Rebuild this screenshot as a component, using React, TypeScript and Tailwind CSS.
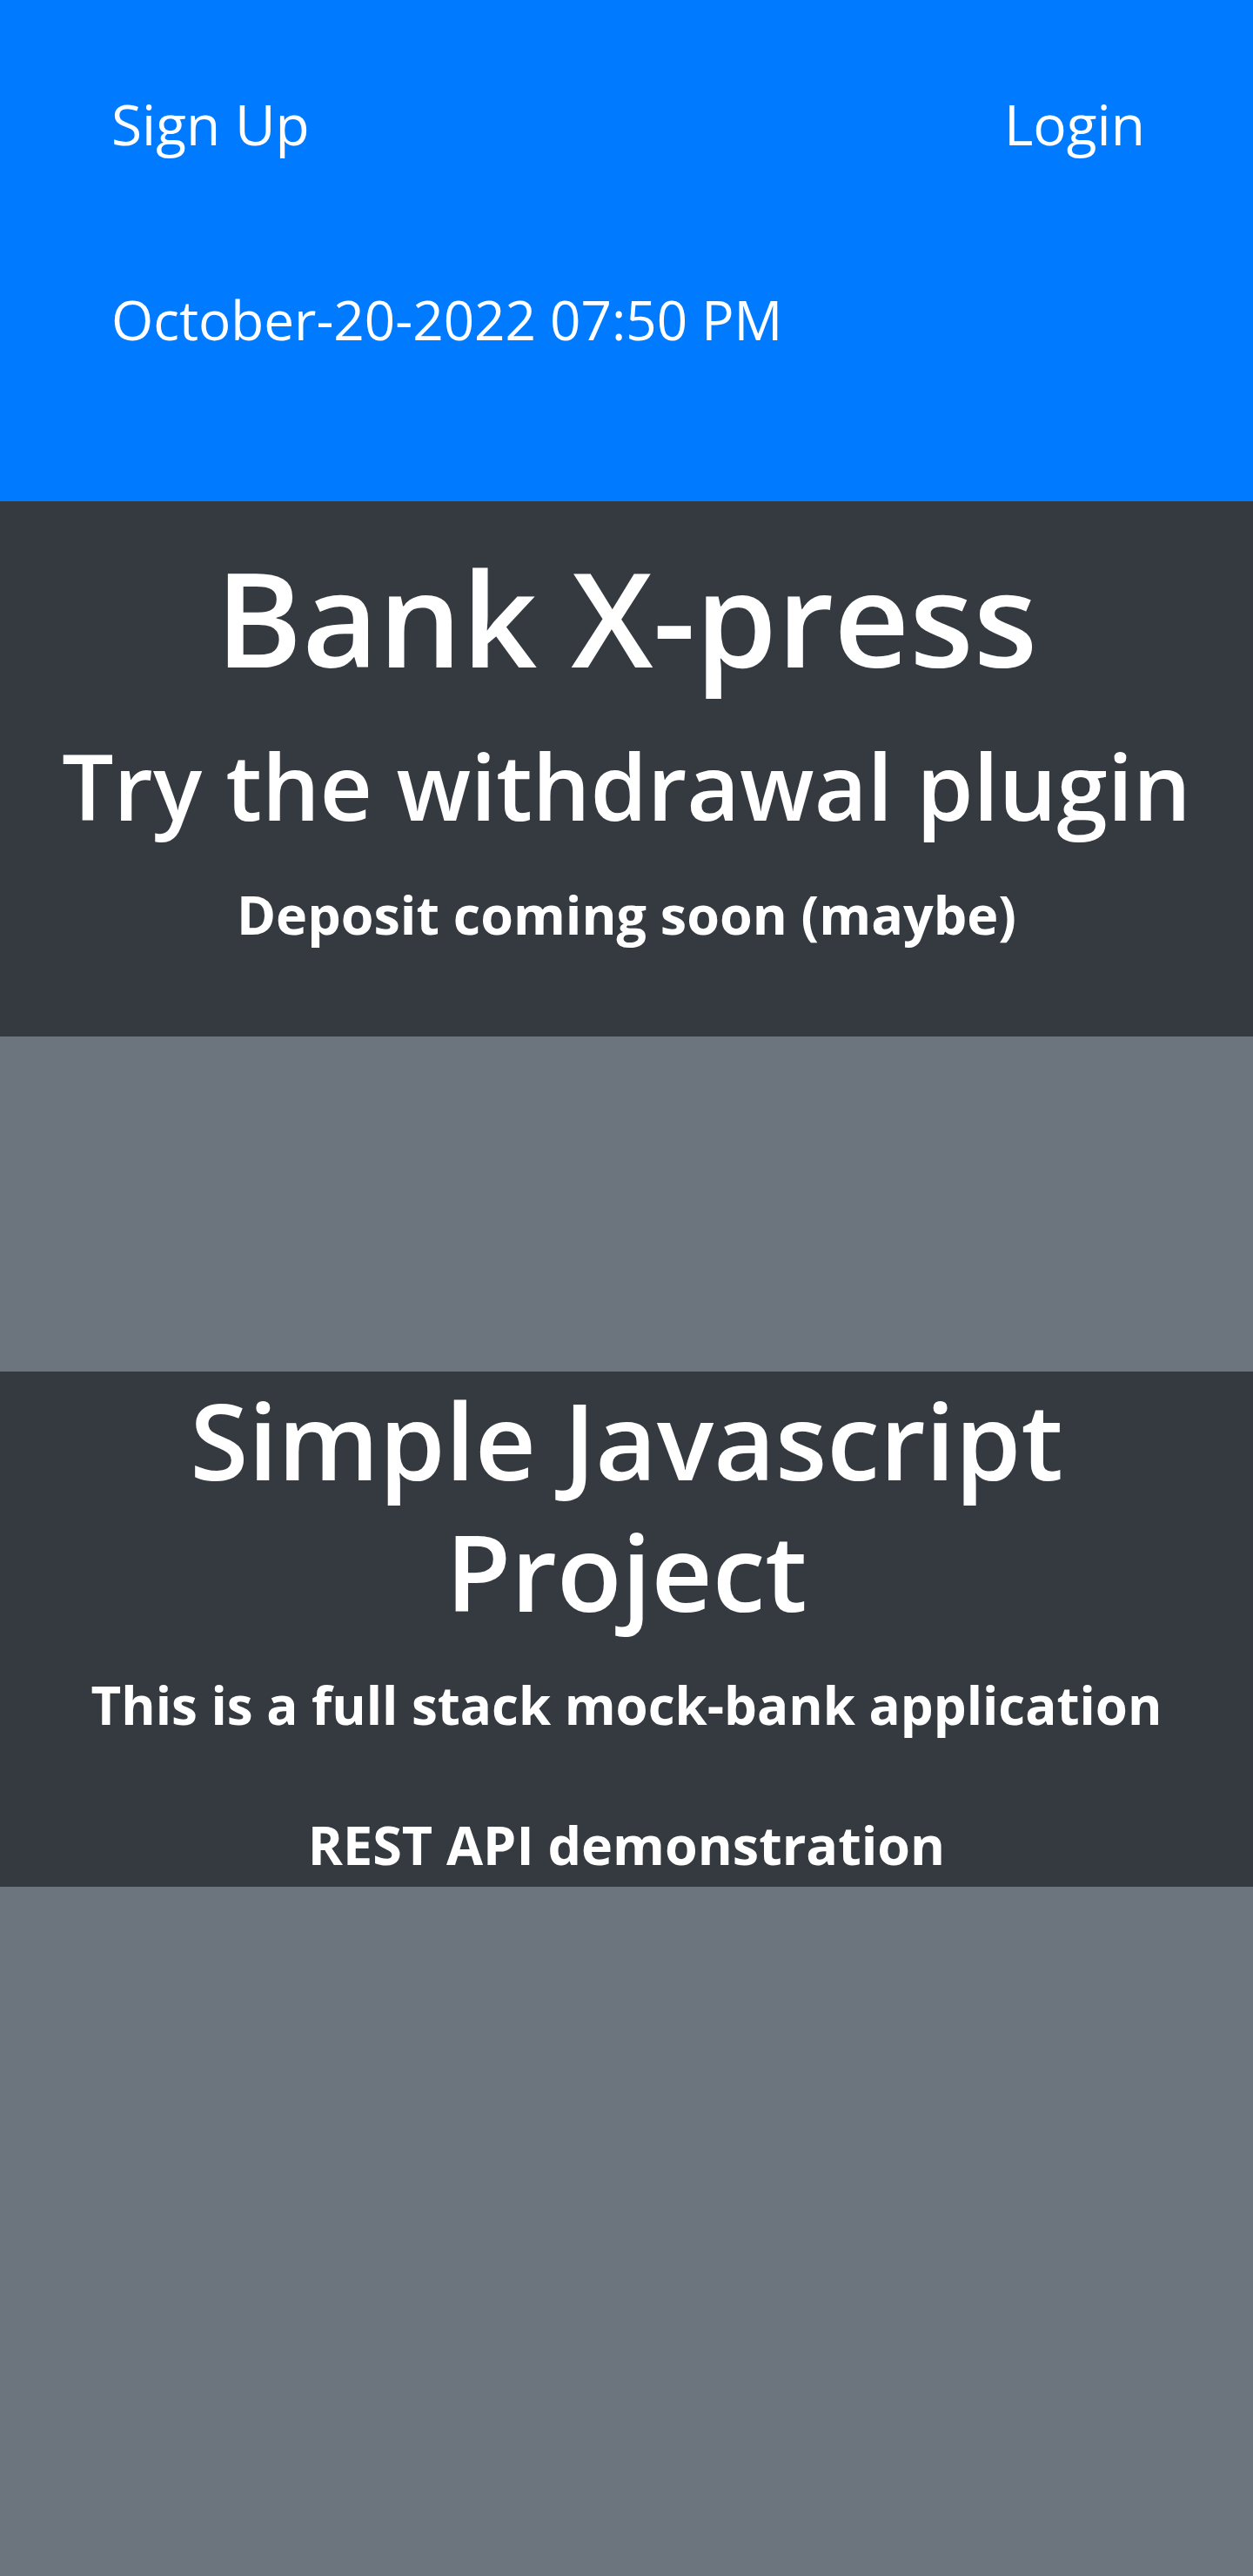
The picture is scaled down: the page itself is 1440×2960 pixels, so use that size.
import React from "react";

export default function App() {
  const font = { fontFamily: '"Open Sans", "Noto Sans", sans-serif' };
  return (
    <div className="min-h-[2960px] bg-[#6c757d] text-white" style={font}>
      <header className="bg-[#007bff] px-[128px] pt-[111px] h-[576px]">
        <nav className="flex justify-between text-[64px] leading-none">
          <a>Sign Up</a>
          <a className="mr-[-4px]">Login</a>
        </nav>
        <p className="mt-[161px] text-[62px] leading-none">October-20-2022 07:50 PM</p>
      </header>

      <section className="bg-[#343a40] text-center h-[615px] pt-[57px]">
        <h1 className="text-[151px] leading-none font-semibold">Bank X-press</h1>
        <h2 className="mt-[66px] text-[105px] leading-none font-semibold">Try the withdrawal plugin</h2>
        <h5 className="mt-[65px] text-[61px] leading-none font-bold">Deposit coming soon (maybe)</h5>
      </section>

      <div className="h-[385px]" />

      <section className="bg-[#343a40] text-center h-[592px] pt-[3px]">
        <h1 className="text-[122px] leading-[151px] font-semibold">
          Simple Javascript
          <br />
          Project
        </h1>
        <h4 className="mt-[48px] text-[60px] leading-none font-bold">This is a full stack mock-bank application</h4>
        <h4 className="mt-[100px] text-[61px] leading-none font-bold">REST API demonstration</h4>
      </section>
    </div>
  );
}
